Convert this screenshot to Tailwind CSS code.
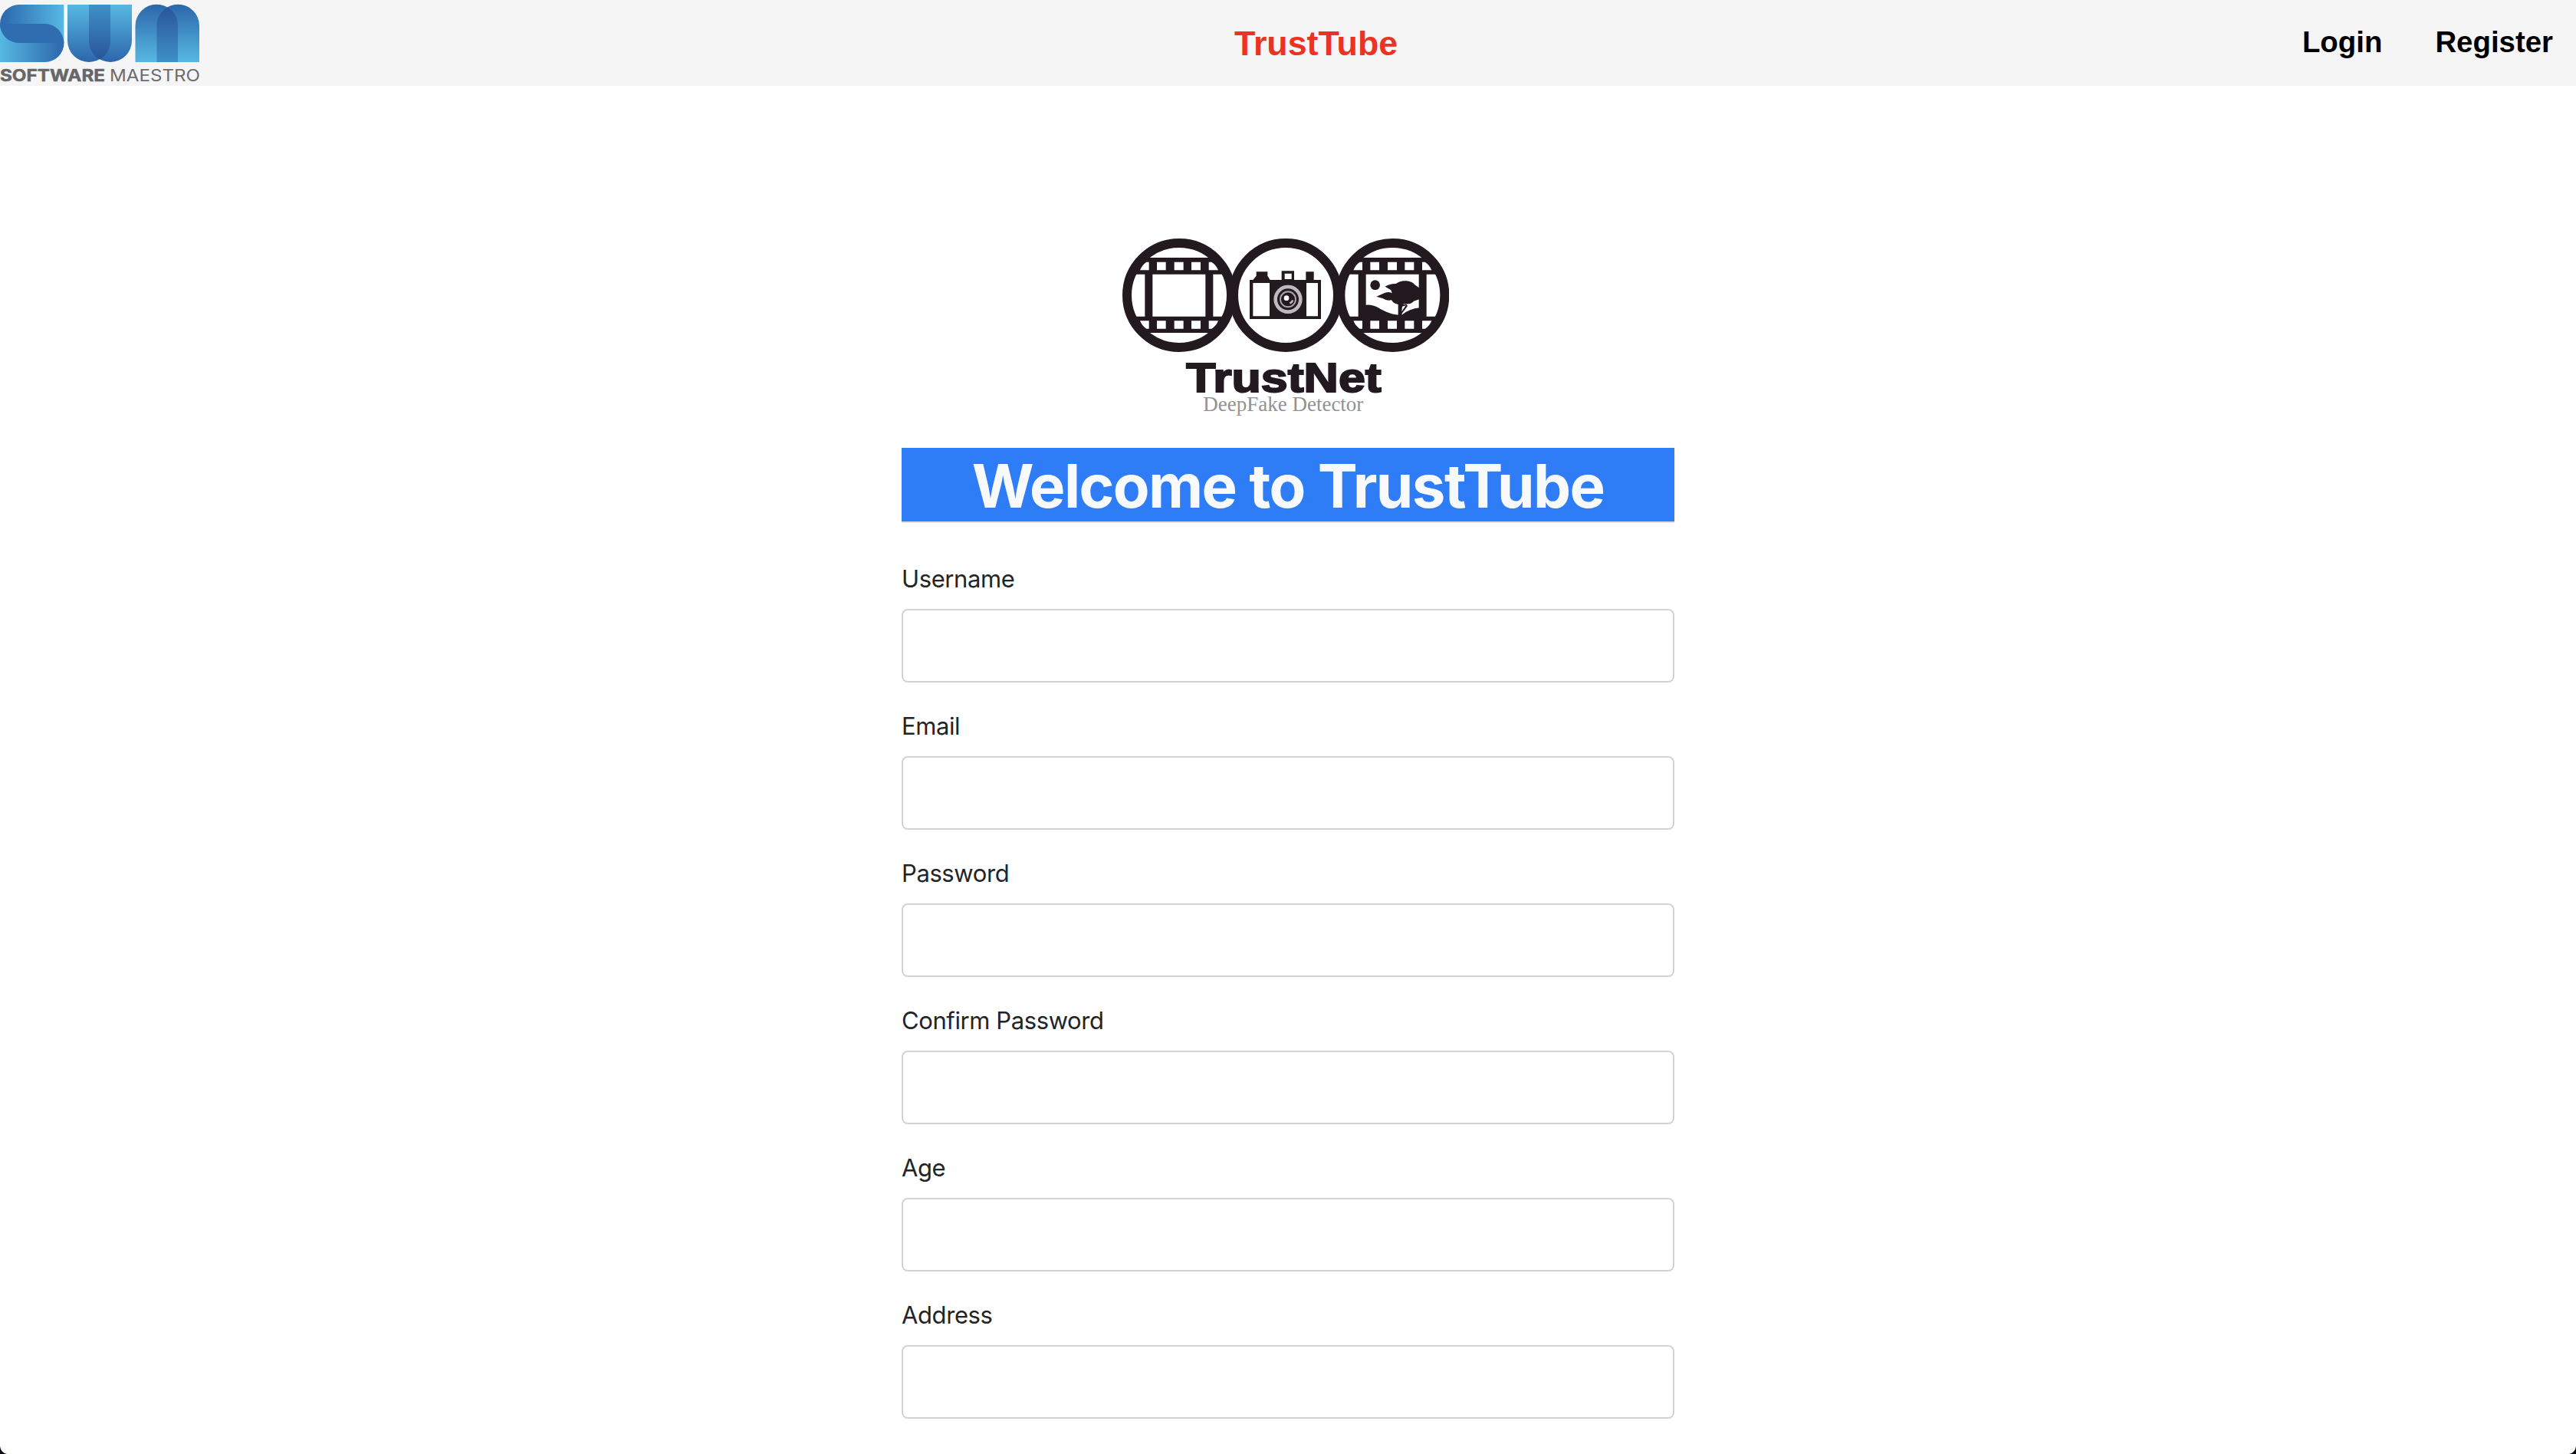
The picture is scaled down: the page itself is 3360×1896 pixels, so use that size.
<!DOCTYPE html>
<html lang="en">
<head>
<meta charset="utf-8">
<title>TrustTube</title>
<script src="https://cdn.jsdelivr.net/npm/@tailwindcss/browser@4"></script>
</head>
<body class="relative h-[1896px] overflow-hidden bg-white font-[Inter,sans-serif] text-[#212529]">
<header class="flex h-28 items-center bg-[#f5f5f5] pr-[30px] font-['Liberation_Sans',Arial,sans-serif] font-bold">
  <svg class="h-28 w-[260px] shrink-0" viewBox="0 0 260 112">
    <defs>
      <linearGradient id="sa"><stop offset=".08" stop-color="#2f6db0"/><stop offset="1" stop-color="#57b8e2"/></linearGradient>
      <linearGradient id="sb"><stop offset="0" stop-color="#57b8e2"/><stop offset=".92" stop-color="#2f6db0"/></linearGradient>
      <linearGradient id="w" x2="0" y2="1"><stop offset="0" stop-color="#57b8e2"/><stop offset="1" stop-color="#2c66ab"/></linearGradient>
      <linearGradient id="wo" x2="0" y2="1"><stop offset="0" stop-color="#3f90c6"/><stop offset="1" stop-color="#29559b"/></linearGradient>
      <linearGradient id="m" x2="0" y2="1"><stop offset="0" stop-color="#2c66ab"/><stop offset="1" stop-color="#57b8e2"/></linearGradient>
      <linearGradient id="mo" x2="0" y2="1"><stop offset="0" stop-color="#29559b"/><stop offset="1" stop-color="#3f90c6"/></linearGradient>
    </defs>
    <path fill="url(#sb)" d="M0 31H58.5A25 25 0 0 1 58.5 81H0Z"/>
    <path fill="url(#sa)" d="M83.3 6H25A25 25 0 0 0 25 56H83.3Z"/>
    <path fill="#2f6db0" d="M0 31H58.5A25 25 0 0 1 83.3 56H25A25 25 0 0 1 0 31Z"/>
    <path fill="url(#w)" d="M88 6H144V53A28 28 0 0 1 88 53Z"/>
    <path fill="url(#w)" d="M116 6H172V53A28 28 0 0 1 116 53Z"/>
    <path fill="url(#wo)" d="M116 6H144V53A28 28 0 0 1 130 77.5A28 28 0 0 1 116 53Z"/>
    <path fill="url(#m)" d="M176.500 81V33.500A27.700 27.700 0 0 1 232 33.500V81Z"/>
    <path fill="url(#m)" d="M204.500 81V33.500A27.700 27.700 0 0 1 260 33.500V81Z"/>
    <path fill="url(#mo)" d="M204.500 81V33.500A27.700 27.700 0 0 1 218.300 9.400A27.700 27.700 0 0 1 232 33.500V81Z"/>
    <text x="0" y="106" class="font-[Inter,sans-serif] font-bold" font-size="21.500" fill="#666" stroke="#666" stroke-width=".5" textLength="137" lengthAdjust="spacingAndGlyphs">SOFTWARE</text>
    <text x="143" y="106" class="font-[Inter,sans-serif] font-normal" font-size="21.500" fill="#6c6c6c" textLength="118" lengthAdjust="spacingAndGlyphs">MAESTRO</text>
  </svg>
  <a class="ml-[1350px] text-[44.8px] leading-none text-[#ec3323]">TrustTube</a>
  <nav class="ml-auto flex gap-[69px] pb-px text-[38.4px] leading-none text-black">
    <a>Login</a><a>Register</a>
  </nav>
</header>

<main class="mx-auto w-[1008px] pt-[178px]">
  <svg class="ml-[264px] h-[270px] w-[450px]" viewBox="0 0 1350 810">
    <defs>
      <clipPath id="ring"><circle cx="294" cy="285" r="200"/></clipPath>
      <g id="film">
        <circle cx="294" cy="285" r="204" fill="none" stroke="#231a20" stroke-width="36"/>
        <g clip-path="url(#ring)">
          <path fill="#231a20" d="M60 138H530V203H60ZM60 368H530V432H60ZM160 200H190V370H160ZM397 200H427V370H397Z"/>
          <path fill="#fff" d="M141 187Q150 165 166 155H176V187ZM207 155H242V187H207ZM275 155H311V187H275ZM342 155H378V187H342ZM410 155H421Q438 165 447 187H410ZM141 385H176V416H166Q150 407 141 385ZM207 385H242V416H207ZM275 385H311V416H275ZM342 385H378V416H342ZM410 385H447Q438 407 421 416H410Z"/>
        </g>
      </g>
    </defs>
    <use href="#film"/>
    <use href="#film" x="835"/>
    <circle cx="711" cy="285" r="204" fill="none" stroke="#231a20" stroke-width="36"/>
    <!-- camera -->
    <path fill="#231a20" d="M570 225H583L596 209V193H640V209L650 225H695V190H744V225H790V193H821V225H849V378H570Z"/>
    <path fill="#fff" d="M583 237H648V367H583ZM792 237H837V367H792ZM707 200H734V222H707Z"/>
    <circle cx="720" cy="301" r="49" fill="#231a20" stroke="#bdb9bc" stroke-width="14"/>
    <circle cx="720" cy="301" r="30" fill="none" stroke="#a9a4a7" stroke-width="6"/>
    <circle cx="714" cy="296" r="10" fill="#fff"/>
    <path d="M727 316Q737 313 738 304" fill="none" stroke="#bdb9bc" stroke-width="7"/>
    <!-- landscape frame -->
    <g fill="#231a20" transform="translate(780 120)">
      <circle cx="281" cy="125" r="19"/>
      <path d="M286 170L318 156Q335 150 347 157L343 145L320 131Q340 119 362 120Q380 106 405 109Q428 112 436 124L456 138V180L432 188Q420 202 395 199L389 202L403 200L408 207L386 236V244H371V201Q350 196 345 184Q325 188 312 178Z"/>
      <path d="M243 203Q270 200 292 213C325 232 350 243 385 242Q415 218 455 214V252H243Z"/>
      <path d="M387 209L401 205L385 229Z" fill="#fff"/>
    </g>
    <text x="322" y="662" class="font-['Liberation_Sans',Arial,sans-serif] font-bold" font-size="160" fill="#231a20" stroke="#231a20" stroke-width="6" textLength="763" lengthAdjust="spacingAndGlyphs">TrustNet</text>
    <text x="388" y="738" class="font-['Liberation_Serif',serif]" font-size="80" fill="#929292" textLength="627" lengthAdjust="spacingAndGlyphs">DeepFake Detector</text>
  </svg>
  <h1 class="mt-6 h-[98px] border-b-2 border-[#dee2e6] bg-[#2f7df6] pt-[3px] text-center text-[78px] leading-[93px] font-bold tracking-[-1.6px] text-[#f8f9fa]">Welcome to TrustTube</h1>
  <form class="mt-[49px] flex flex-col gap-8 text-[31px] leading-[48px] tracking-[-0.4px]">
    <label class="block">Username<input class="mt-[15px] mb-px block h-24 w-full rounded-lg border-2 border-[#ced4da] bg-white px-6"></label>
    <label class="block">Email<input class="mt-[15px] mb-px block h-24 w-full rounded-lg border-2 border-[#ced4da] bg-white px-6"></label>
    <label class="block">Password<input type="password" class="mt-[15px] mb-px block h-24 w-full rounded-lg border-2 border-[#ced4da] bg-white px-6"></label>
    <label class="block">Confirm Password<input type="password" class="mt-[15px] mb-px block h-24 w-full rounded-lg border-2 border-[#ced4da] bg-white px-6"></label>
    <label class="block">Age<input class="mt-[15px] mb-px block h-24 w-full rounded-lg border-2 border-[#ced4da] bg-white px-6"></label>
    <label class="block">Address<input class="mt-[15px] mb-px block h-24 w-full rounded-lg border-2 border-[#ced4da] bg-white px-6"></label>
  </form>
</main>
<!-- rounded window corners -->
<svg class="absolute bottom-0 left-0 size-[10px]" viewBox="0 0 10 10"><path fill="#0b0b14" d="M0 0Q1 8 9 10H0Z"/></svg>
<svg class="absolute right-0 bottom-0 size-[10px]" viewBox="0 0 10 10"><path fill="#0b0b14" d="M10 0Q9 8 1 10H10Z"/></svg>
</body>
</html>
